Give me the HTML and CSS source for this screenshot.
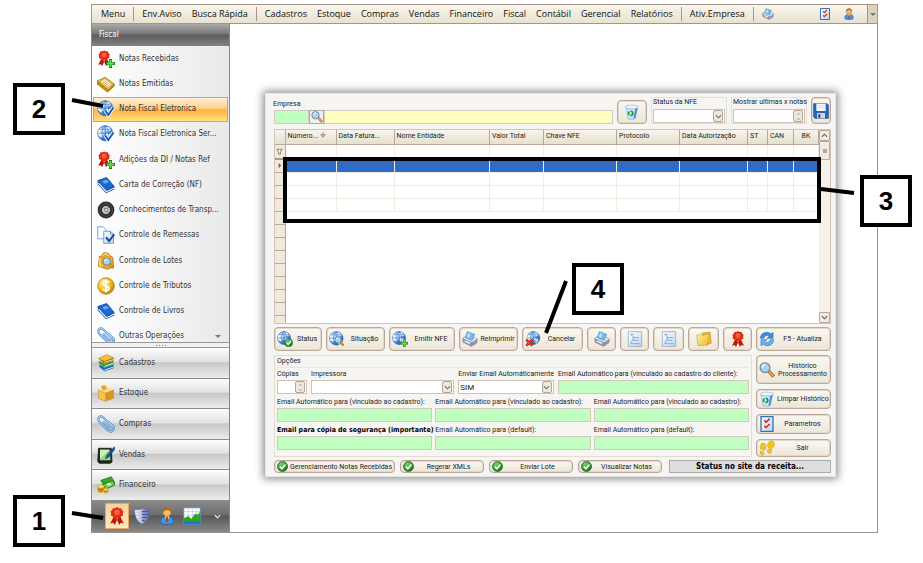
FILE: index.html
```html
<!DOCTYPE html>
<html lang="pt-BR">
<head>
<meta charset="utf-8">
<meta name="viewport" content="width=device-width, initial-scale=1">
<title>Nota Fiscal Eletronica</title>
<link rel="stylesheet" href="styles.css">
</head>
<body>
<svg class="sprite" aria-hidden="true">
  <defs>
    <radialGradient id="gBlue" cx=".35" cy=".3" r=".8"><stop offset="0" stop-color="#d9ecfb"/><stop offset=".5" stop-color="#5b9be0"/><stop offset="1" stop-color="#1c4fa3"/></radialGradient>
    <radialGradient id="gGold" cx=".35" cy=".3" r=".8"><stop offset="0" stop-color="#fff0a0"/><stop offset=".5" stop-color="#f5bf20"/><stop offset="1" stop-color="#b97a08"/></radialGradient>
    <radialGradient id="gGreen" cx=".35" cy=".25" r=".8"><stop offset="0" stop-color="#7ed06a"/><stop offset="1" stop-color="#087a10"/></radialGradient>
    <linearGradient id="gShield"><stop offset="0" stop-color="#fff"/><stop offset="1" stop-color="#6b74b8"/></linearGradient>
    <linearGradient id="gFolder" x2="1" y2="1"><stop offset="0" stop-color="#fff3a6"/><stop offset="1" stop-color="#efb71c"/></linearGradient>
    <linearGradient id="gPaper" x2="1" y2="1"><stop offset="0" stop-color="#fff"/><stop offset="1" stop-color="#bcd6f2"/></linearGradient>
  </defs>
  <symbol id="i-ribbon" viewBox="0 0 24 24"><path d="M8 12 3 22l4-1 2 3 4-9zM16 12l5 10-4-1-2 3-4-9z" fill="#b8190c"/><path d="M12 0l2.500 1.500 3 0 1 2.500 2 2-.8 2.800.3 2.700-2.700 1.200-2 2.300-3.300-.5-3.300.5-2-2.300L4 11.500l.3-2.700L3.500 6l2-2 1-2.500 3 0z" fill="#e22b14"/><circle cx="12" cy="7.500" r="4.200" fill="#f35a35" stroke="#d9290f" stroke-width=".8"/><path d="M9 6q3-3 6 0" stroke="#f98a66" fill="none"/></symbol>
  <symbol id="i-plus" viewBox="0 0 12 12"><path d="M4 0h4v4h4v4H8v4H4V8H0V4h4z" fill="#0b6b12"/><path d="M4.700 1h2.600v3.700H11v2.600H7.300V11H4.700V7.300H1V4.700h3.700z" fill="#5fdc4a"/></symbol>
  <symbol id="i-ribbonplus" viewBox="0 0 24 24"><use href="#i-ribbon" x="-1" y="0" width="21" height="22"/><use href="#i-plus" x="12" y="12" width="12" height="12"/></symbol>
  <symbol id="i-scan" viewBox="0 0 24 24"><path d="M0 8 11 3l12 9-8 9z" fill="#f0c14a" stroke="#9a6a0c"/><path d="M0 8v4l14 11 9-8v-3l-8 8z" fill="#c98e14" stroke="#8a5c08" stroke-width=".7"/><path d="M4 8.500 11 5l8 6.500-4 5z" fill="#fdf6dc" stroke="#a87c20" stroke-width=".6"/><path d="M8 9l6 4.500M10 7.500l6 4.500" stroke="#b08a40" stroke-width="1"/></symbol>
  <symbol id="i-globe" viewBox="0 0 24 24"><circle cx="11.500" cy="11.500" r="10.500" fill="url(#gBlue)" stroke="#2c66b4"/><path d="M5 4l3 2-2 4 3 2-1 5-3 1-4-5 1-6zM11 2l6 1 3 4-4 2-5-3zM13 11l5 1 2 4-4 5-3-4z" fill="#e9f4fd"/><path d="M11.500 1v21M1 11.500h21M3 6h17M3 17h17M11.500 1q-10 10 0 21M11.500 1q10 10 0 21" stroke="#2b68bc" stroke-width=".8" fill="none"/></symbol>
  <symbol id="i-globecheck" viewBox="0 0 24 24"><use href="#i-globe" width="23" height="23"/><path d="M11 14l4 6 7-10" fill="none" stroke="#fff" stroke-width="5"/><path d="M11 14l4 6 7-10" fill="none" stroke="#1d57ae" stroke-width="2.600"/></symbol>
  <symbol id="i-ok" viewBox="0 0 16 16"><circle cx="8" cy="8" r="7.300" fill="url(#gGreen)" stroke="#0a6510"/><path d="M4 8l3 3.200L12.200 5" fill="none" stroke="#fff" stroke-width="2.400"/></symbol>
  <symbol id="i-globeok" viewBox="0 0 24 24"><use href="#i-globe" width="22" height="22"/><use href="#i-ok" x="11" y="11" width="13" height="13"/></symbol>
  <symbol id="i-globeplus" viewBox="0 0 24 24"><use href="#i-globe" width="22" height="22"/><use href="#i-plus" x="13" y="13" width="11" height="11"/></symbol>
  <symbol id="i-globex" viewBox="0 0 24 24"><use href="#i-globe" x="2" width="22" height="22"/><path d="M2 13l9 9M11 13l-9 9" stroke="#c81e10" stroke-width="4"/><path d="M2 13l9 9M11 13l-9 9" stroke="#f25a3c" stroke-width="1.500"/></symbol>
  <symbol id="i-find" viewBox="0 0 24 24"><path d="M14 13l8 9" stroke="#a85b14" stroke-width="5"/><path d="M14 13l7.500 8.500" stroke="#f2a44c" stroke-width="2.600"/><circle cx="9" cy="8.500" r="7.300" fill="#a9d4f5" stroke="#74899e" stroke-width="2"/><path d="M4.500 8q1-4.500 5-4.500" stroke="#fff" stroke-width="2" fill="none"/></symbol>
  <symbol id="i-globefind" viewBox="0 0 24 24"><use href="#i-globe" width="23" height="23"/><use href="#i-find" x="8" y="8" width="15" height="15"/></symbol>
  <symbol id="i-book" viewBox="0 0 24 24"><path d="M1 6 13 2l10 12-11 5z" fill="#1b6ad0" stroke="#0c3f93"/><path d="M1 6v5l11 12 11-5v-4l-11 5z" fill="#0d4499"/><path d="M2 9.500 12.500 21 23 16" stroke="#e9f1fb" stroke-width="1.700" fill="none"/><path d="M7 7l6-2 3 3-6 2.200z" fill="#62abf2"/></symbol>
  <symbol id="i-tire" viewBox="0 0 24 24"><circle cx="12" cy="12" r="11.200" fill="#2f2f2f"/><circle cx="12" cy="12" r="8.500" fill="none" stroke="#575757"/><circle cx="12" cy="12" r="6" fill="#c6c8c9" stroke="#111"/><path d="M9 9l6 6M15 8l-4 5" stroke="#777" stroke-width="1.400"/><circle cx="12" cy="12" r="2" fill="#f4f4f4" stroke="#666"/></symbol>
  <symbol id="i-docs" viewBox="0 0 24 24"><path d="M1 1h7l4 4v12H1z" fill="#fff" stroke="#4c83c2"/><path d="M9 7h9l4 4v12H9z" fill="url(#gPaper)" stroke="#4c83c2"/><path d="M18 7v4h4" fill="none" stroke="#4c83c2"/><path d="M12 15l4 5 7-9" fill="none" stroke="#1b4c9e" stroke-width="2.700"/></symbol>
  <symbol id="i-box" viewBox="0 0 24 24"><path d="M2 8l9 4v11l-9-4z" fill="#f4c153"/><path d="M11 12l11-4v11l-11 4z" fill="#d9991f"/><path d="M2 8 12 3l10 5-11 4z" fill="#ffe08c"/><path d="M5 4q3-4 7-1l1 4-5 2z" fill="#e8a72a"/><path d="M2 8l9 4 11-4v11l-11 4-9-4z" fill="none" stroke="#b57b14" stroke-width=".6"/></symbol>
  <symbol id="i-boxfind" viewBox="0 0 24 24"><path d="M3 6 7 5q0-5 5-4t5 4l4 2 1 13-8 3L2 19z" fill="#e9a626" stroke="#a96f0a"/><path d="M8 5q1-3 4-2.500t3 3" fill="none" stroke="#fff0bd" stroke-width="1.300"/><path d="M4 8v10l3 1" stroke="#ffdf88" stroke-width="2" fill="none"/><use href="#i-find" x="7" y="7" width="16" height="16"/></symbol>
  <symbol id="i-coin" viewBox="0 0 24 24"><circle cx="12" cy="12" r="11" fill="url(#gGold)" stroke="#a9730b"/><path d="M16 7.500q-1.500-2-4-2-3.800 0-3.800 3 0 2.300 3.800 3.200t3.900 3.400q0 3.200-3.900 3.200-3 0-4.500-2.300M12 3.500v17" stroke="#fff" stroke-width="2.400" fill="none"/></symbol>
  <symbol id="i-clip" viewBox="0 0 24 24"><path d="M8 9l8 8q2 2 3.500.5T19 14L8 3Q5 .5 2.700 3T3 9l11 11q4 4 7 1t.5-6L14 8" fill="none" stroke="#4a83c8" stroke-width="2.800"/><path d="M8 9l8 8q2 2 3.500.5T19 14L8 3Q5 .5 2.700 3T3 9l11 11q4 4 7 1t.5-6L14 8" fill="none" stroke="#a9d3f8" stroke-width="1.400"/></symbol>
  <symbol id="i-books" viewBox="0 0 24 24"><path d="M3 17l7 6 12-4v-5l-12 4-7-4z" fill="#1d67c0"/><path d="M10 21.500 21.500 17.500" stroke="#fff" stroke-width="1.100"/><path d="M2 12l8 6 12-4v-5l-12 4-7-4z" fill="#3c9c2c"/><path d="M10 16.500 21.500 12.500" stroke="#fff" stroke-width="1.100"/><path d="M2 6l8 7 12-4V5l-12 4z" fill="#a9700a"/><path d="M2 6 13 1l9 4-12 5z" fill="#f3bf33" stroke="#a9700a" stroke-width=".7"/><path d="M10 11.500 21.500 7.500" stroke="#fff" stroke-width="1"/></symbol>
  <symbol id="i-tablet" viewBox="0 0 24 24"><path d="M2 3h17l1 18-2 2H3l-2-2z" fill="#202420" stroke="#111"/><path d="M4 5h13l1 14H4z" fill="#8adf72"/><path d="M4 5h13L4 17z" fill="#c8f4b8"/><path d="M23 1 13 12l-2 5 5-2.500L24 4z" fill="#1b57a8" stroke="#0e2f66" stroke-width=".6"/></symbol>
  <symbol id="i-money" viewBox="0 0 24 24"><path d="M5 6 19 1l5 8-13 6z" fill="#39a82a" stroke="#16701a"/><path d="M8 11 21 6l3 6-13 6z" fill="#63c94b" stroke="#16701a"/><ellipse cx="16" cy="11" rx="3" ry="2" fill="#e1f8cf"/><path d="M1 14v7q4 3 8 0v-7z" fill="#d49b13"/><ellipse cx="5" cy="14" rx="4.500" ry="2.300" fill="#ffe379" stroke="#a8750a" stroke-width=".7"/><path d="M9 18v4q3 2 6 0v-4z" fill="#d49b13"/><ellipse cx="12" cy="18" rx="3.500" ry="1.800" fill="#ffe379" stroke="#a8750a" stroke-width=".7"/><path d="M1 17.500q4 3 8 0" stroke="#8d6206" fill="none"/></symbol>
  <symbol id="i-shield" viewBox="0 0 24 24"><path d="M2 3q6 1 10-1 4 2 10 1 0 15-10 20Q2 18 2 3z" fill="url(#gShield)" stroke="#5f6596"/><path d="M12 6h9M12 10h8.500M12 14h7M12 18h4" stroke="#4d559c" stroke-width="1.800"/><path d="M4 7h8M4 11h8M6 15h6" stroke="#b9bddb" stroke-width="1.200"/></symbol>
  <symbol id="i-person" viewBox="0 0 24 24"><path d="M4 22q-2-8 5-9h6q7 1 5 9-8 3-16 0z" fill="#3f97e6" stroke="#1d5ca6"/><path d="M9 12l3 8 3-8z" fill="#fff"/><path d="M11 13h2l1 6-2 2-2-2z" fill="#d33420"/><circle cx="12" cy="7" r="5.500" fill="#f5bd5c" stroke="#a5661a"/><path d="M6.500 7Q6 1 12 1t5.500 6Q15 3.500 12 4T6.500 7z" fill="#b56a16"/></symbol>
  <symbol id="i-chart" viewBox="0 0 24 24"><path d="M1 1h22v22H1z" fill="#fff" stroke="#3b87c9"/><path d="M1 6h22M1 11h22M7 1v20M13 1v20M18 1v20" stroke="#b5cfe4"/><path d="M1 15l6-3 4 4 5-7 4 1 3-4v15H1z" fill="#2da229"/><path d="M1 19h22v4H1z" fill="#2574c4"/></symbol>
  <symbol id="i-printer" viewBox="0 0 24 24"><path d="M1 11 8 6l15 6-1 6-8 5L2 17z" fill="#8f96ae" stroke="#666d86" stroke-width=".8"/><path d="M1 11 8 6l15 6-8 5z" fill="#dde1ec"/><path d="M5 10 8 1l11 4-4 9z" fill="#6fbaf0" stroke="#3f7fb6" stroke-width=".8"/><path d="M7 9l2-6 4 1.500-2 6z" fill="#b9e0fb"/><path d="M4 15l8 3.500" stroke="#fff" stroke-width="2"/></symbol>
  <symbol id="i-check" viewBox="0 0 24 24"><path d="M3 1h18v22H3z" fill="url(#gPaper)" stroke="#2878c0" stroke-width="2"/><path d="M8 6.500l2.500 3L16 4M8 14.500l2.500 3L16 12" stroke="#d6261a" stroke-width="2.300" fill="none"/></symbol>
  <symbol id="i-trash" viewBox="0 0 24 24"><path d="M3 5l17-1-3 18q-5 2-11 0z" fill="#cfe6fa" stroke="#6aa0d4" stroke-width=".8"/><path d="M17 6l4-1-4 16-3 1.500z" fill="#4a8fd8"/><ellipse cx="12" cy="4.500" rx="10" ry="2.800" fill="#eef7ff" stroke="#6aa0d4" stroke-width=".8"/><circle cx="10" cy="14" r="3.200" fill="none" stroke="#149e20" stroke-width="2.400" stroke-dasharray="5 1.700"/></symbol>
  <symbol id="i-floppy" viewBox="0 0 24 24"><path d="M1 1h20l2 2v20H3l-2-2z" fill="#2468bd" stroke="#113c80"/><path d="M5 1h14v11H5z" fill="#f2f8fe"/><path d="M7 4h10M7 7h10" stroke="#c9dcf0"/><path d="M6 15h12v8H6z" fill="#d2d7df"/><path d="M8 17h3v5H8z" fill="#173e7b"/></symbol>
  <symbol id="i-folder" viewBox="0 0 24 24"><path d="M9 3l12-1 2 16-8 3z" fill="#efbd32" stroke="#a77a0d" stroke-width=".7"/><path d="M1 6l6-1 2 2 11-3-3 17-14 1z" fill="url(#gFolder)" stroke="#b58a1b" stroke-width=".7"/></symbol>
  <symbol id="i-form" viewBox="0 0 24 24"><path d="M2 1h20v22H2z" fill="url(#gPaper)" stroke="#7b9cc4"/><path d="M5 5h5M9 10h9M9 14h8M5 19h14" stroke="#8097bd" stroke-width="1.200"/><path d="M6 5l4 5-4 8" fill="none" stroke="#6f97cc" stroke-width="1.200"/></symbol>
  <symbol id="i-refresh" viewBox="0 0 24 24"><path d="M2 11q1-9 10-9 4 0 6 2.500L21 2v9h-9l3-3q-5-4-8 3z" fill="#3c90e0" stroke="#1f62b2" stroke-width=".8"/><path d="M22 13q-1 9-10 9-4 0-6-2.500L3 22v-9h9l-3 3q5 4 8-3z" fill="#67b4f2" stroke="#1f62b2" stroke-width=".8"/></symbol>
  <symbol id="i-feet" viewBox="0 0 24 24"><path d="M2 10q1-7 6-5 4 2 2 8-2 3-5 2-4-1-3-5zM2 17l5 1q1 5-2 5-4-1-3-6zM13 6q2-6 8-4 4 3 1 8-2 4-6 3-4-2-3-7zM13 14l6 1q0 6-4 5-3-1-2-6z" fill="#f4c61c" stroke="#b98c0c" stroke-width=".7"/></symbol>
  <symbol id="i-down" viewBox="0 0 8 8"><path d="M1 2.500l3 3 3-3" fill="none" stroke="currentColor" stroke-width="1.200"/></symbol>
  <symbol id="i-up" viewBox="0 0 8 8"><path d="M1 5.500l3-3 3 3" fill="none" stroke="currentColor" stroke-width="1.200"/></symbol>
</svg>

<div class="app">
  <nav class="menubar" aria-label="Principal">
    <button>Menu</button><i class="sep"></i>
    <button>Env.Aviso</button><button>Busca Rápida</button><i class="sep"></i>
    <button>Cadastros</button><button>Estoque</button><button>Compras</button><button>Vendas</button><button>Financeiro</button><button>Fiscal</button><button>Contábil</button><button>Gerencial</button><button>Relatórios</button><i class="sep"></i>
    <button>Ativ.Empresa</button><i class="sep"></i>
    <button aria-label="Imprimir"><svg class="ic12"><use href="#i-printer"/></svg></button>
    <span class="menubar-end">
      <button aria-label="Tarefas"><svg class="ic12"><use href="#i-check"/></svg></button>
      <button aria-label="Usuário"><svg class="ic12"><use href="#i-person"/></svg></button>
      <button class="menubar-more" aria-label="Mais"><span class="tri"></span></button>
    </span>
  </nav>

  <div class="body">
    <aside class="sidebar">
      <h2>Fiscal</h2>
      <div class="side-scroll">
        <ul class="side-list">
          <li><a href="#"><svg><use href="#i-ribbonplus"/></svg><span>Notas Recebidas</span></a></li>
          <li><a href="#"><svg><use href="#i-scan"/></svg><span>Notas Emitidas</span></a></li>
          <li><a href="#" class="active"><svg><use href="#i-globecheck"/></svg><span>Nota Fiscal Eletronica</span></a></li>
          <li><a href="#"><svg><use href="#i-globecheck"/></svg><span>Nota Fiscal Eletronica Ser...</span></a></li>
          <li><a href="#"><svg><use href="#i-ribbonplus"/></svg><span>Adições da DI / Notas Ref</span></a></li>
          <li><a href="#"><svg><use href="#i-book"/></svg><span>Carta de Correção (NF)</span></a></li>
          <li><a href="#"><svg><use href="#i-tire"/></svg><span>Conhecimentos de Transp...</span></a></li>
          <li><a href="#"><svg><use href="#i-docs"/></svg><span>Controle de Remessas</span></a></li>
          <li><a href="#"><svg><use href="#i-boxfind"/></svg><span>Controle de Lotes</span></a></li>
          <li><a href="#"><svg><use href="#i-coin"/></svg><span>Controle de Tributos</span></a></li>
          <li><a href="#"><svg><use href="#i-book"/></svg><span>Controle de Livros</span></a></li>
          <li><a href="#"><svg><use href="#i-clip"/></svg><span>Outras Operações</span><i class="tri side-more"></i></a></li>
        </ul>
      </div>
      <div class="splitter"><i></i><i></i><i></i><i></i></div>
      <div class="side-nav">
        <button><svg><use href="#i-books"/></svg>Cadastros</button>
        <button><svg><use href="#i-box"/></svg>Estoque</button>
        <button><svg><use href="#i-clip"/></svg>Compras</button>
        <button><svg><use href="#i-tablet"/></svg>Vendas</button>
        <button><svg><use href="#i-money"/></svg>Financeiro</button>
      </div>
      <div class="side-foot">
        <button class="active" aria-label="Fiscal"><svg><use href="#i-ribbon"/></svg></button>
        <button aria-label="Segurança"><svg><use href="#i-shield"/></svg></button>
        <button aria-label="Usuários"><svg><use href="#i-person"/></svg></button>
        <button aria-label="Gráficos"><svg><use href="#i-chart"/></svg></button>
        <button aria-label="Mais opções"><svg class="chev"><use href="#i-down"/></svg></button>
      </div>
    </aside>

    <main class="workspace">
      <section class="dialog">
        <div class="top">
          <div class="company">
            <label for="empresa">Empresa</label>
            <div class="company-row">
              <input id="empresa" class="green code">
              <button class="lookup" aria-label="Localizar"><svg class="ic12"><use href="#i-find"/></svg></button>
              <input class="yellow" aria-label="Nome da empresa" readonly>
            </div>
          </div>
          <button class="btn trash" aria-label="Limpar"><svg class="ic16"><use href="#i-trash"/></svg></button>
          <div class="box">
            <label for="status">Status da NFE</label>
            <div class="field"><select id="status"><option></option></select><span class="drop"><svg><use href="#i-down"/></svg></span></div>
          </div>
          <div class="box">
            <label for="ultimas">Mostrar ultimas x notas</label>
            <div class="field"><input id="ultimas"><span class="spin"><svg><use href="#i-up"/></svg><svg><use href="#i-down"/></svg></span></div>
          </div>
          <button class="btn save" aria-label="Salvar"><svg class="ic16"><use href="#i-floppy"/></svg></button>
        </div>

        <div class="grid">
          <div class="grid-view">
            <table>
              <colgroup><col class="c10"><col class="c52"><col class="c58"><col><col class="c54"><col class="c73"><col class="c63"><col class="c68"><col class="c20"><col class="c26"><col class="c25"></colgroup>
              <thead><tr><th></th><th>Número... <svg class="sort" viewBox="0 0 8 8"><path d="M4 0v6M1 3.500h6L4 7z" stroke="#8a7870" fill="none"/></svg></th><th>Data Fatura...</th><th>Nome Entidade</th><th>Valor Total</th><th>Chave NFE</th><th>Protocolo</th><th>Data Autorização</th><th>ST</th><th>CAN</th><th class="mid">BK</th></tr></thead>
              <tbody>
                <tr class="filter"><th><svg viewBox="0 0 8 8"><path d="M1 1.500h6L5 4.500V7H3V4.500z" fill="#fff" stroke="#806f66"/></svg></th><td></td><td></td><td></td><td></td><td></td><td></td><td></td><td></td><td></td><td></td></tr>
                <tr class="sel"><th><svg viewBox="0 0 8 8"><path d="M3 1l3 3-3 3z" fill="#6f625c"/></svg></th><td></td><td></td><td></td><td></td><td></td><td></td><td></td><td></td><td></td><td></td></tr>
                <tr><th></th><td></td><td></td><td></td><td></td><td></td><td></td><td></td><td></td><td></td><td></td></tr>
                <tr><th></th><td></td><td></td><td></td><td></td><td></td><td></td><td></td><td></td><td></td><td></td></tr>
                <tr><th></th><td></td><td></td><td></td><td></td><td></td><td></td><td></td><td></td><td></td><td></td></tr>
                <tr class="blank"><th></th><td colspan="10"></td></tr>
                <tr class="blank"><th></th><td colspan="10"></td></tr>
                <tr class="blank"><th></th><td colspan="10"></td></tr>
                <tr class="blank"><th></th><td colspan="10"></td></tr>
                <tr class="blank"><th></th><td colspan="10"></td></tr>
                <tr class="blank"><th></th><td colspan="10"></td></tr>
                <tr class="blank"><th></th><td colspan="10"></td></tr>
                <tr class="blank"><th></th><td colspan="10"></td></tr>
                <tr class="blank"><th></th><td colspan="10"></td></tr>
              </tbody>
            </table>
          </div>
          <div class="scroll"><span class="arrow"><svg><use href="#i-up"/></svg></span><span class="thumb"></span><span class="arrow end"><svg><use href="#i-down"/></svg></span></div>
          <div class="highlight"></div>
        </div>

        <div class="toolbar">
          <button class="btn w47"><svg><use href="#i-globeok"/></svg><span>Status</span></button>
          <button class="btn w58"><svg><use href="#i-globefind"/></svg><span>Situação</span></button>
          <button class="btn w66"><svg><use href="#i-globeplus"/></svg><span>Emitir NFE</span></button>
          <button class="btn w58"><svg><use href="#i-printer"/></svg><span>Reimprimir</span></button>
          <button class="btn w60"><svg><use href="#i-globex"/></svg><span>Cancelar</span></button>
          <button class="btn w29" aria-label="Imprimir"><svg><use href="#i-printer"/></svg></button>
          <button class="btn w29" aria-label="Relatório"><svg><use href="#i-form"/></svg></button>
          <button class="btn w31" aria-label="Detalhes"><svg><use href="#i-form"/></svg></button>
          <button class="btn w31" aria-label="Abrir pasta"><svg><use href="#i-folder"/></svg></button>
          <button class="btn w29" aria-label="Certificado"><svg><use href="#i-ribbon"/></svg></button>
          <button class="btn last"><svg><use href="#i-refresh"/></svg><span>F5 - Atualiza</span></button>
        </div>

        <div class="lower">
          <fieldset class="options">
            <legend>Opções</legend>
            <div class="row first">
              <div class="cell copies"><label for="copias">Cópias</label><div class="field"><input id="copias"><span class="spin"><svg><use href="#i-up"/></svg><svg><use href="#i-down"/></svg></span></div></div>
              <div class="cell printer"><label for="impressora">Impressora</label><div class="field"><select id="impressora"><option></option></select><span class="drop"><svg><use href="#i-down"/></svg></span></div></div>
              <div class="cell auto"><label for="auto">Enviar Email Automáticamente</label><div class="field"><select id="auto"><option>SIM</option></select><span class="drop"><svg><use href="#i-down"/></svg></span></div></div>
              <div class="cell client"><label for="e0">Email Automático para (vinculado ao cadastro do cliente):</label><input id="e0" class="green"></div>
            </div>
            <div class="row">
              <div class="cell"><label for="e1">Email Automático para (vinculado ao cadastro):</label><input id="e1" class="green"></div>
              <div class="cell"><label for="e2">Email Automático para (vinculado ao cadastro):</label><input id="e2" class="green"></div>
              <div class="cell"><label for="e3">Email Automático para (vinculado ao cadastro):</label><input id="e3" class="green"></div>
            </div>
            <div class="row">
              <div class="cell"><label for="e4" class="strong">Email para cópia de segurança (importante)</label><input id="e4" class="green"></div>
              <div class="cell"><label for="e5">Email Automático para (default):</label><input id="e5" class="green"></div>
              <div class="cell"><label for="e6">Email Automático para (default):</label><input id="e6" class="green"></div>
            </div>
          </fieldset>
          <div class="actions">
            <button class="btn tall"><svg><use href="#i-find"/></svg><span>Histórico<br>Processamento</span></button>
            <button class="btn"><svg><use href="#i-trash"/></svg><span>Limpar Histórico</span></button>
            <button class="btn"><svg><use href="#i-check"/></svg><span>Parametros</span></button>
            <button class="btn short"><svg><use href="#i-feet"/></svg><span>Sair</span></button>
          </div>
        </div>

        <div class="bottom">
          <button class="btn wide"><svg><use href="#i-ok"/></svg><span>Gerenciamento Notas Recebidas</span></button>
          <button class="btn"><svg><use href="#i-ok"/></svg><span>Regerar XMLs</span></button>
          <button class="btn"><svg><use href="#i-ok"/></svg><span>Enviar Lote</span></button>
          <button class="btn"><svg><use href="#i-ok"/></svg><span>Visualizar Notas</span></button>
          <output class="site-status">Status no site da receita...</output>
        </div>
      </section>
    </main>
  </div>
</div>

<div class="callout n1">1</div>
<div class="callout n2">2</div>
<div class="callout n3">3</div>
<div class="callout n4">4</div>
<svg class="pointers" aria-hidden="true"><path d="M72 513l31 5M72 100l31 6M821 189l33 4M566 281l-20 52"/></svg>
</body>
</html>
```

FILE: styles.css
```css
* { box-sizing: border-box; }
body { margin: 0; background: #fff; color: #222; font: 8px/10px Roboto, "Liberation Sans", sans-serif; position: relative; min-height: 100vh; }
button, input, select { font: inherit; color: inherit; margin: 0; padding: 0; border: 0; background: none; min-width: 0; border-radius: 0; }
select { appearance: none; }
svg { display: block; flex: none; }
ul, h2 { margin: 0; padding: 0; list-style: none; font: inherit; }
a { color: inherit; text-decoration: none; }
.sprite { position: absolute; width: 0; height: 0; }
.ic12 { width: 12px; height: 12px; }
.ic16 { width: 18px; height: 18px; }
.tri { border: 3px solid transparent; border-top-color: #777; border-bottom: 0; }

.app { margin: 0 45px 0 91px; padding-top: 4px; height: calc(100vh - 30px); display: flex; flex-direction: column; }

/* Menu bar */
.menubar { display: flex; align-items: center; flex: none; height: 20px; padding-left: 9px; gap: 10px; border: 1px solid #a8938c; background: linear-gradient(#f8f5ec, #e8e2cf); font: 9px/12px "Open Sans", "Noto Sans", sans-serif; color: #111; white-space: nowrap; }
.menubar .sep { width: 1px; height: 14px; background: #a8938c; margin: 0 -2px; }
.menubar-end { margin-left: auto; display: flex; align-items: center; align-self: stretch; gap: 12px; }
.menubar-more { width: 10px; align-self: stretch; display: grid; place-items: center; border-left: 1px solid #a8938c; background: #ddd2bd; }

.body { flex: 1; display: flex; min-height: 0; border: 1px solid #9f918c; border-top: 0; border-left: 0; }

/* Sidebar */
.sidebar { width: 139px; flex: none; display: flex; flex-direction: column; border: 1px solid #888; border-top: 0; font: 8px/12px "DejaVu Sans Condensed", "DejaVu Sans", sans-serif; color: #333; }
.sidebar h2 { height: 22px; padding: 5px 7px; color: #fff; background: linear-gradient(#aaa, #777 45%, #5c5c5c 50%, #828282); }
.side-scroll { flex: 1; min-height: 0; overflow: hidden; background: linear-gradient(90deg, #fff, #e9e9e9); }
.side-list { height: calc(100% + 7px); display: grid; grid-template-columns: minmax(0, 1fr); grid-auto-rows: 1fr; }
.side-list a { display: flex; align-items: center; gap: 4px; height: 100%; margin: 0 1px; padding: 0 3px; border: 1px solid transparent; white-space: nowrap; }
.side-list svg, .side-nav svg { width: 18px; height: 18px; }
.side-list .active { border-color: #d9a35a; background: linear-gradient(#fff0d9, #ffd089 45%, #ffb13f 52%, #ffe07e); }
.side-more { margin-left: auto; margin-right: 3px; }
.splitter { height: 6px; display: flex; justify-content: center; align-items: center; gap: 2px; border: solid #999; border-width: 1px 0; background: #f1f1f1; }
.splitter i { width: 1px; height: 1px; background: #777; }
.side-nav { display: grid; grid-auto-rows: 1fr; height: 153px; flex: none; }
.side-nav button { display: flex; align-items: center; gap: 4px; padding: 0 5px; border-bottom: 1px solid #8b8b8b; background: linear-gradient(#fdfdfd, #e2e2e2 45%, #c8c8c8 50%, #ececec); text-align: left; }
.side-foot { height: 30px; flex: none; display: flex; align-items: center; justify-content: flex-end; background: linear-gradient(#8a8a8a, #6e6e6e 45%, #585858 50%, #858585); color: #fff; }
.side-foot button { width: 24px; height: 26px; display: grid; place-items: center; margin-left: 1px; }
.side-foot svg { width: 18px; height: 18px; }
.side-foot .chev { width: 7px; height: 7px; }
.side-foot .active { border: 1px solid #e8a864; background: linear-gradient(#fbcf9b, #ffe9b8); }

/* Dialog */
.workspace { flex: 1; min-width: 0; padding: 69px 41px 0 35px; }
.dialog { padding: 3px 4px 3px 8px; border: 1px solid #e4e4e4; background: #f7f5f1; box-shadow: 0 0 8px 2px rgba(0, 0, 0, .45); font-size: 7px; line-height: 9px; white-space: nowrap; }
.btn { display: flex; align-items: center; gap: 2px; padding: 0 2px; height: 24px; border: 1px solid #b9a79c; border-radius: 4px; background: linear-gradient(#faf8f2, #ece6d8); box-shadow: inset 0 0 0 1px #e2d9cb; line-height: 8px; }
.btn svg { width: 16px; height: 16px; }
.btn span { flex: 1; text-align: center; }
.btn svg:only-child { margin: auto; }
input, select { height: 14px; }
.green { background: #c0ffc0; border: 1px solid #cfc9be; }
.yellow { background: #ffffc0; border: 1px solid #cfc9be; flex: 1; }

.top { display: flex; align-items: flex-end; gap: 4px; height: 27px; }
.company { flex: 1; min-width: 0; }
.company label { display: block; margin-left: -1px; }
.company-row { display: flex; margin-top: 1px; }
.code { width: 35px; }
.lookup { width: 15px; height: 14px; border: 1px solid #aaa; background: #eee; display: grid; place-items: center; }
.trash { width: 30px; }
.save { width: 20px; height: 27px; padding: 0; }
.box { width: 76px; height: 27px; padding: 0 1px; border: 1px solid #e6e0d6; }
.box label { display: block; height: 11px; }
.field { display: flex; align-items: center; height: 14px; padding-right: 1px; border: 1px solid #cfc3b8; background: #fff; font-size: 8px; }
.field input, .field select { flex: 1; height: 100%; padding-left: 1px; }
.drop, .spin { width: 10px; height: 12px; display: grid; place-items: center; border: 1px solid #b5a59b; border-radius: 2px; background: #eee8dd; color: #77675e; }
.drop svg { width: 7px; height: 7px; }
.spin svg { width: 5px; height: 4px; }

/* Data grid */
.grid { position: relative; display: flex; height: 195px; margin-top: 5px; border: 1px solid #cfc3ba; background: #fff; }
.grid-view { flex: 1; min-width: 0; overflow: hidden; }
table { width: 100%; table-layout: fixed; border-collapse: collapse; }
th, td { padding: 0; height: 13px; }
th { font-weight: normal; text-align: left; }
thead th { height: 14px; padding-left: 2px; border: solid #b9a79c; border-width: 0 1px 1px 0; background: linear-gradient(#f7f4ec, #e7dfd0); }
td { border: 1px solid #efece2; }
tbody th { border: 1px solid #b9a79c; border-left: 0; background: #efe9de; }
tbody th svg { width: 7px; height: 7px; margin: auto; }
.blank td { border: 0; }
.filter th, .filter td { height: 15px; border-bottom: 2px solid #a49a8a; }
.sel td { background: #316ac5; }
.mid { text-align: center; padding: 0; }
.sort { display: inline; width: 6px; height: 6px; }
.c10 { width: 10px; } .c52 { width: 51px; } .c58 { width: 58px; } .c54 { width: 54px; } .c73 { width: 73px; } .c63 { width: 63px; } .c68 { width: 68px; } .c20 { width: 20px; } .c26 { width: 26px; } .c25 { width: 25px; }
.scroll { width: 11px; display: flex; flex-direction: column; background: #f7f2e9; }
.arrow, .thumb { height: 11px; display: grid; place-items: center; border: 1px solid #b9a79c; border-radius: 1px; background: #f1ece2; color: #66564e; }
.arrow svg { width: 7px; height: 7px; }
.arrow.end { margin-top: auto; }
.thumb { height: 19px; }
.thumb::before { content: ""; width: 4px; height: 4px; background: #b3a69c; }
.highlight { position: absolute; left: 8px; top: 27px; right: 9px; height: 66px; border: 4px solid #000; }

.toolbar { display: flex; justify-content: space-between; margin-top: 3px; }
.w29 { width: 29px; } .w31 { width: 31px; } .w47 { width: 48px; } .w58 { width: 59px; } .w60 { width: 61px; } .w66 { width: 66px; }
.last { width: 75px; }

.lower { display: flex; gap: 4px; margin-top: 4px; }
.options { flex: 1; min-width: 0; height: 102px; margin: 0; padding: 1px 2px 0; border: 1px solid #e3ddd1; }
.options legend { float: left; width: 100%; padding: 0; height: 11px; border-bottom: 1px solid #ebe7dd; }
.row { clear: both; display: grid; grid-template-columns: repeat(3, 1fr); gap: 3px; padding-top: 4px; }
.row.first { grid-template-columns: 30px 3fr 2fr 4fr; gap: 4px; padding-top: 2px; }
.cell { display: flex; flex-direction: column; min-width: 0; }
.cell label { height: 10px; }
.strong { font: bold 7px/9px "DejaVu Sans Condensed", "DejaVu Sans", sans-serif; color: #000; }
.actions { width: 75px; display: flex; flex-direction: column; justify-content: space-between; }
.actions .btn { height: 20px; }
.actions .tall { height: 29px; }
.actions .short { height: 18px; }

.bottom { display: flex; gap: 5px; margin-top: 3px; }
.bottom .btn { width: 84px; height: 13px; }
.bottom .wide { width: 121px; }
.bottom .btn svg { width: 11px; height: 11px; }
.site-status { flex: 1; height: 13px; margin-left: 2px; border: 1px solid #aaa; background: #dedede; color: #000; font: bold 8px/11px "DejaVu Sans Condensed", "DejaVu Sans", sans-serif; text-align: center; }

/* Step callouts */
.callout { position: absolute; width: 52px; height: 52px; display: grid; place-items: center; border: 4px solid #000; background: #fff; color: #000; font: bold 26px/30px "Liberation Sans", sans-serif; }
.n1 { left: 13px; top: 495px; }
.n2 { left: 13px; top: 83px; }
.n3 { left: 860px; top: 175px; }
.n4 { left: 572px; top: 263px; }
.pointers { position: absolute; left: 0; top: 0; width: 100%; height: 100%; pointer-events: none; fill: none; stroke: #000; stroke-width: 4px; }
```
